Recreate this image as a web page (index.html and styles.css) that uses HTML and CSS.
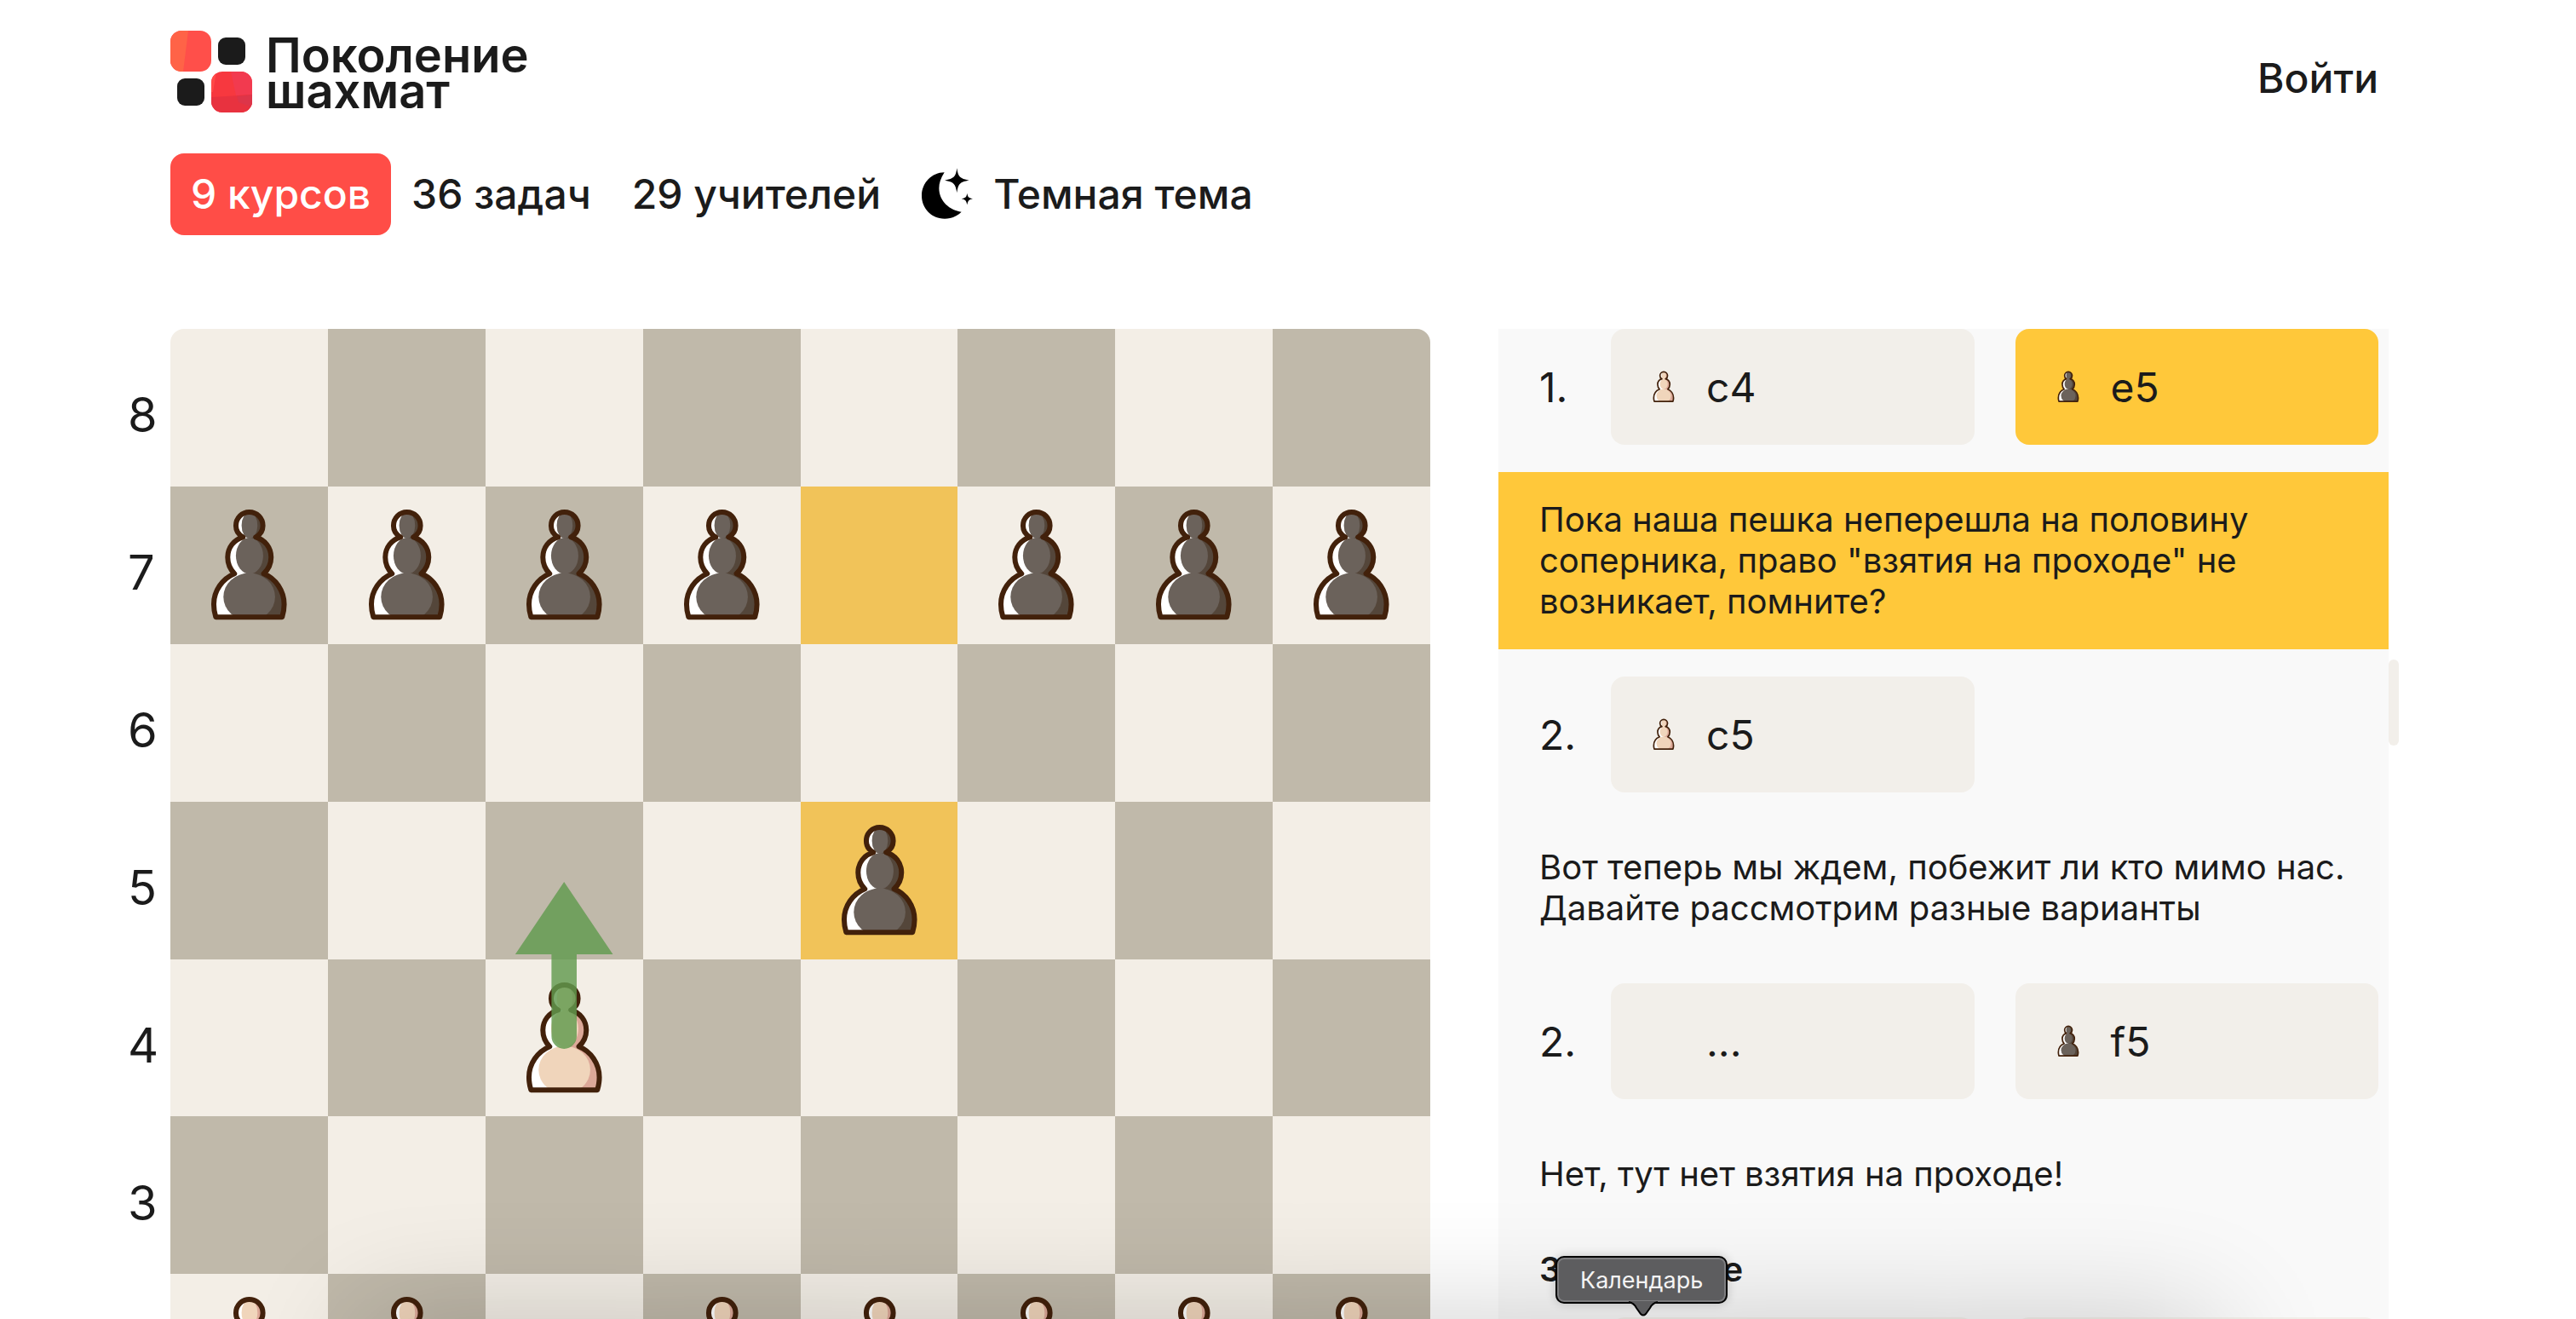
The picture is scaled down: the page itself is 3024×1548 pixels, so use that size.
FILE: index.html
```html
<!DOCTYPE html>
<html lang="ru">
<head>
<meta charset="utf-8">
<title>Поколение шахмат</title>
<link rel="stylesheet" href="styles.css">
</head>
<body>
<svg class="sprite" aria-hidden="true">
  <defs>
    <clipPath id="pawn-body"><path id="pawn-outline" d="M188 63C215 63 236 84 236 111C236 128 228 142 211 151C243 160 265 188 265 222C265 246 256 264 239 280C280 296 311 340 311 388C311 405 308 420 304 433H70C66 420 63 405 63 388C63 340 93 298 136 280C120 264 112 246 112 222C112 188 134 160 166 151C149 142 141 128 141 111C141 84 162 63 188 63Z"/></clipPath>
    <symbol id="pawn" viewBox="-90 -27 555 555">
      <g clip-path="url(#pawn-body)">
        <path fill="#fff" d="M50 50H188V440H50Z"/>
        <path class="shade" d="M188 50H330V440H188Z"/>
        <g class="body">
          <ellipse cx="189" cy="110" rx="28" ry="46"/>
          <ellipse cx="189" cy="217" rx="48" ry="64"/>
          <ellipse cx="188" cy="362" rx="91" ry="84"/>
        </g>
      </g>
      <use href="#pawn-outline" fill="none" stroke="#42210b" stroke-width="18" stroke-linejoin="round"/>
    </symbol>
  </defs>
</svg>

<header class="header">
  <div class="top">
    <a class="logo" href="#">
      <svg class="logo-mark" viewBox="0 0 96 96" aria-hidden="true">
        <clipPath id="tile-a"><rect width="48" height="48" rx="13"/></clipPath>
        <clipPath id="tile-b"><rect x="48" y="48" width="48" height="48" rx="13"/></clipPath>
        <g clip-path="url(#tile-a)"><path fill="#ff4f4a" d="M0 0H48V48H0Z"/><path fill="#ff6347" d="M0 0H21L18 24L15 48H0Z"/></g>
        <rect x="56" y="8" width="32" height="32" rx="9" fill="#1b1b1b"/>
        <rect x="8" y="56" width="32" height="32" rx="9" fill="#1b1b1b"/>
        <g clip-path="url(#tile-b)"><path fill="#f7383f" d="M48 48H96V96H48Z"/><path fill="#f23a4f" d="M71 48H96V75L77 76Z"/><path fill="#e8323f" d="M48 78L96 75V96H48Z"/><path fill="#dd3549" d="M78 77L96 75V90L80 84Z"/><path fill="#ff4a48" d="M48 48H54L50 72H48Z"/></g>
      </svg>
      <span class="logo-name">Поколение<br>шахмат</span>
    </a>
    <a class="login" href="#">Войти</a>
  </div>
  <nav class="nav">
    <a class="nav-item active" href="#">9 курсов</a>
    <a class="nav-item" href="#">36 задач</a>
    <a class="nav-item" href="#">29 учителей</a>
    <button class="nav-item theme" type="button">
      <svg class="moon" viewBox="36 36 180 180" aria-hidden="true"><path d="M116 52C72 52 36 89 36 134C36 179 72 215 117 215C140 215 161 206 176 191C120 185 68 124 116 52Z"/><path d="M160 37C164 67 170 74 203 80C170 85 165 92 160 124C155 92 149 85 117 80C150 74 156 67 160 37Z"/><path d="M196 125C198 139 202 142 216 145C202 148 199 152 196 166C193 152 190 148 176 145C190 142 194 139 196 125Z"/></svg>
      Темная тема
    </button>
  </nav>
</header>

<main class="lesson">
  <div class="board-wrap">
    <div class="ranks"><span>8</span><span>7</span><span>6</span><span>5</span><span>4</span><span>3</span><span>2</span><span>1</span></div>
    <div class="board" id="board">
      <svg class="arrow" viewBox="0 0 800 800" aria-hidden="true"><path d="M250 351L281 397H258V449A8 8 0 0 1 242 449V397H219Z"/></svg>
    </div>
  </div>

  <div class="side">
    <section class="moves">
      <div class="move"><span>1.</span><button class="ply" type="button"><svg class="icon white"><use href="#pawn"/></svg>c4</button><button class="ply current" type="button"><svg class="icon black"><use href="#pawn"/></svg>e5</button></div>
      <p class="note current">Пока наша пешка неперешла на половину соперника, право "взятия на проходе" не возникает, помните?</p>
      <div class="move"><span>2.</span><button class="ply" type="button"><svg class="icon white"><use href="#pawn"/></svg>c5</button></div>
      <p class="note">Вот теперь мы ждем, побежит ли кто мимо нас. Давайте рассмотрим разные варианты</p>
      <div class="move"><span>2.</span><button class="ply" type="button"><svg class="icon"></svg>...</button><button class="ply" type="button"><svg class="icon black"><use href="#pawn"/></svg>f5</button></div>
      <p class="note">Нет, тут нет взятия на проходе!</p>
      <h2 class="subtitle">Завлечение</h2>
      <div class="move"><span></span><button class="ply" type="button"></button><button class="ply" type="button"></button></div>
    </section>
    <div class="scroll"><div class="thumb"></div></div>
  </div>
</main>

<div class="dock-shadow"></div>
<div class="tooltip" role="tooltip">Календарь<svg class="tip" viewBox="0 0 34 18" aria-hidden="true"><path class="tip-fill" d="M0 0C5 2 7 4 9 8L14 15Q17 18 20 15L25 8C27 4 29 2 34 0Z"/><path class="tip-line" d="M0 1C5 2 7 4 9 8L14 15Q17 18 20 15L25 8C27 4 29 2 34 1"/></svg></div>
<script src="board.js"></script>
</body>
</html>
```
FILE: styles.css
```css
* { box-sizing: border-box; }
html { height: 100%; overflow: hidden; }
body {
  height: 100%;
  margin: 0;
  overflow: hidden;
  position: relative;
  background: #fff;
  color: #1b1b1b;
  font-family: Inter, "Liberation Sans", sans-serif;
}
a { color: inherit; text-decoration: none; }
button { border: 0; background: none; color: inherit; font: inherit; cursor: pointer; }
.sprite { position: absolute; width: 0; height: 0; }

.header { padding: 36px 232px 0 200px; }
.top { display: flex; justify-content: space-between; align-items: center; }
.logo { display: flex; align-items: center; gap: 16px; }
.logo-mark { width: 96px; height: 96px; }
.logo-name { padding-top: 4px; font-size: 56px; font-weight: 600; line-height: 42px; }
.login { font-size: 48px; font-weight: 500; line-height: 72px; padding-top: 16px; }

.nav { display: flex; margin-top: 48px; }
.nav-item {
  display: flex;
  align-items: center;
  gap: 24px;
  height: 96px;
  padding: 0 24px 2px;
  border-radius: 16px;
  font-size: 48px;
  font-weight: 500;
}
.nav-item.active { background: #ff4d47; color: #fff; }
.moon { width: 60px; height: 60px; }

.lesson {
  display: grid;
  grid-template-columns: 1529fr 1057fr;
  column-gap: 80px;
  padding: 110px 208px 0 150px;
}
.board-wrap { display: grid; grid-template-columns: 50px 1fr; }
.ranks { display: grid; grid-template-rows: repeat(8, 1fr); font-size: 56px; line-height: 56px; }
.ranks span { align-self: center; padding-top: 18px; }
.board {
  position: relative;
  display: grid;
  grid-template-columns: repeat(8, 1fr);
  grid-template-rows: repeat(8, 1fr);
  aspect-ratio: 1;
  border-radius: 16px;
  overflow: hidden;
}
.square { background: #f3eee6; min-width: 0; min-height: 0; }
.square.dark { background: #c0b9aa; }
.square.mark { background: #f1c359; }
.piece { display: block; width: 100%; height: 100%; }
.white { fill: #f0d5bb; --shade: #dca898; }
.black { fill: #6b625b; --shade: #54463a; }
.shade { fill: var(--shade); }
.arrow { position: absolute; inset: 0; width: 100%; height: 100%; fill: #629b4f; opacity: .82; }

.side { display: flex; align-items: stretch; }
.moves { flex: 1; background: #f9f9f9; }
.move {
  display: grid;
  grid-template-columns: 84px 1fr 1fr;
  align-items: center;
  padding: 0 12px 0 48px;
  font-size: 48px;
}
.ply {
  display: flex;
  align-items: center;
  gap: 24px;
  height: 136px;
  padding: 0 36px;
  border-radius: 16px;
  background: #f2efea;
}
.ply + .ply { margin-left: 24px; }
.move .ply:nth-child(2) { margin-right: 24px; }
.ply.current, .note.current { background: #ffc83a; }
.icon { width: 52px; height: 52px; }
.note { margin: 32px 0; padding: 32px 48px; font-size: 40px; line-height: 48px; }
.subtitle { margin: 32px 48px; font-size: 40px; font-weight: 600; line-height: 48px; }
.scroll { width: 12px; padding-top: 388px; }
.thumb { height: 101px; border-radius: 6px; background: #f2efea; }

.dock-shadow {
  position: absolute;
  left: 14%;
  right: 14%;
  bottom: -300px;
  height: 300px;
  box-shadow: 0 0 140px rgba(0, 0, 0, .2);
}
.tooltip {
  position: absolute;
  left: 1826px;
  bottom: 18px;
  height: 56px;
  padding: 0 27px;
  border: 2px solid #000;
  border-radius: 10px;
  background: #5d5d5f;
  box-shadow: inset 0 0 0 2px #7e7e80, 0 0 12px rgba(0, 0, 0, .2);
  color: #f4f4f4;
  font-size: 27px;
  line-height: 54px;
}
.tip { position: absolute; top: 51px; left: 84px; width: 34px; height: 18px; overflow: visible; }
.tip-fill { fill: #5d5d5f; }
.tip-line { fill: none; stroke: #000; stroke-width: 2; }
```
FILE: board.js
```js
const position = [
  '........',
  'pppp.ppp',
  '........',
  '....p...',
  '..P.....',
  '........',
  'PP.PPPPP',
  '........'
];
const marked = ['1-4', '3-4'];
const board = document.getElementById('board');

position.forEach((rank, row) => {
  [...rank].forEach((piece, col) => {
    const square = document.createElement('div');
    square.className = 'square';
    if ((row + col) % 2) square.classList.add('dark');
    if (marked.includes(row + '-' + col)) square.classList.add('mark');
    if (piece !== '.') {
      const color = piece === 'p' ? 'black' : 'white';
      square.innerHTML = `<svg class="piece ${color}"><use href="#pawn"/></svg>`;
    }
    board.append(square);
  });
});
```
